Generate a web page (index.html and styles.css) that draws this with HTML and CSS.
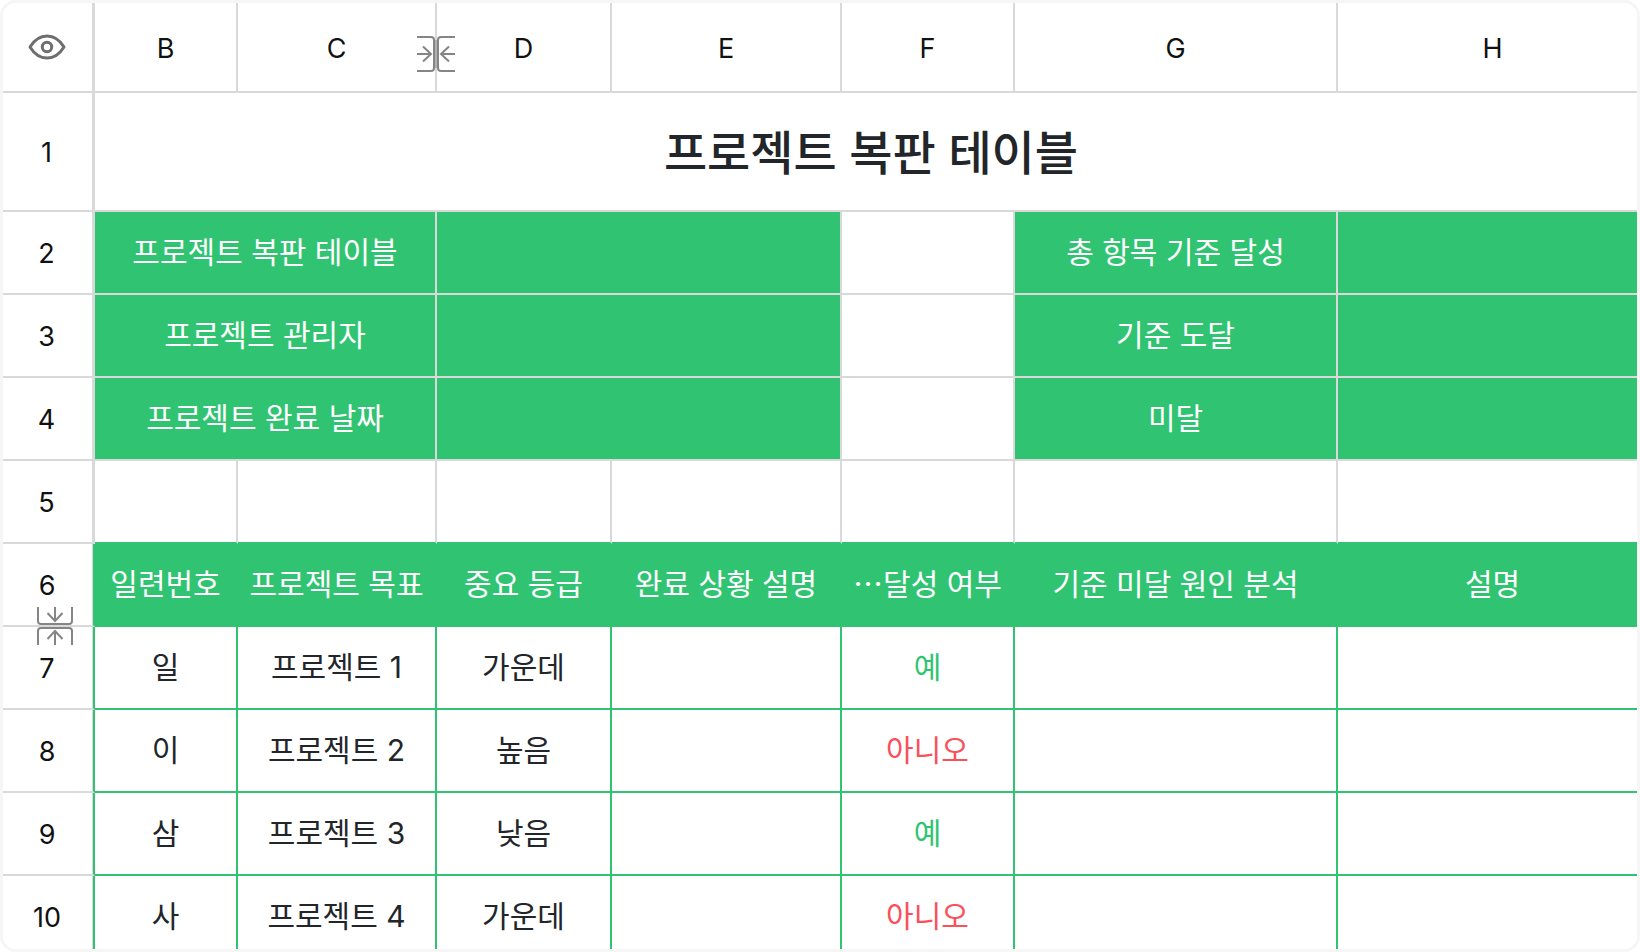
FILE: index.html
```html
<!DOCTYPE html>
<html lang="ko">
<head>
<meta charset="utf-8">
<title>프로젝트 복판 테이블</title>
<link rel="stylesheet" href="styles.css">
</head>
<body>
<main class="frame">
<table class="sheet">
<colgroup>
<col class="col-index"><col class="col-b"><col class="col-c"><col class="col-d"><col class="col-e"><col class="col-f"><col class="col-g"><col class="col-h">
</colgroup>
<thead>
<tr class="letters">
<th class="index corner">
<button class="eye" type="button" aria-label="보기">
<svg width="38" height="28" viewBox="0 0 38 28" fill="none" stroke="#6e6e6e" stroke-width="3" stroke-linejoin="round"><path d="M2 14C6 7.500 11.500 3 19 3s13 4.500 17 11c-4 6.500-9.500 11-17 11S6 20.500 2 14Z"/><circle cx="19" cy="14" r="4.700"/></svg>
</button>
</th>
<th scope="col">B</th>
<th scope="col" class="anchor">C
<button class="fold fold-col" type="button" aria-label="열 펼치기">
<svg width="40" height="38" viewBox="0 0 40 38" fill="none" stroke="#858585" stroke-width="2"><path d="M1 2h14q3 0 3 3v28q0 3-3 3H1M39 2H25q-3 0-3 3v28q0 3 3 3h14M1 19h14M7 11.500l8 7.500-8 7.500M39 19H25M33 11.500L25 19l8 7.500"/><path d="M18.500 5v28M21.500 5v28"/></svg>
</button>
</th>
<th scope="col">D</th>
<th scope="col">E</th>
<th scope="col">F</th>
<th scope="col">G</th>
<th scope="col">H</th>
</tr>
</thead>
<tbody>
<tr class="title-row"><th class="index" scope="row">1</th><td class="title" colspan="7">프로젝트 복판 테이블</td></tr>
<tr><th class="index" scope="row">2</th><td class="fill" colspan="2">프로젝트 복판 테이블</td><td class="fill" colspan="2"></td><td></td><td class="fill">총 항목 기준 달성</td><td class="fill"></td></tr>
<tr><th class="index" scope="row">3</th><td class="fill" colspan="2">프로젝트 관리자</td><td class="fill" colspan="2"></td><td></td><td class="fill">기준 도달</td><td class="fill"></td></tr>
<tr><th class="index" scope="row">4</th><td class="fill" colspan="2">프로젝트 완료 날짜</td><td class="fill" colspan="2"></td><td></td><td class="fill">미달</td><td class="fill"></td></tr>
<tr class="spacer"><th class="index" scope="row">5</th><td></td><td></td><td></td><td></td><td></td><td></td><td></td></tr>
</tbody>
<tbody class="goals">
<tr class="heads"><th class="index anchor" scope="row">6
<button class="fold fold-row" type="button" aria-label="행 펼치기">
<svg width="38" height="40" viewBox="0 0 38 40" fill="none" stroke="#858585" stroke-width="2"><path d="M2 1v14q0 3 3 3h28q3 0 3-3V1M2 39V25q0-3 3-3h28q3 0 3 3v14M19 1v14M11.500 7l7.500 8 7.500-8M19 39V25M11.500 33l7.500-8 7.500 8"/></svg>
</button>
</th><td>일련번호</td><td>프로젝트 목표</td><td>중요 등급</td><td>완료 상황 설명</td><td>⋯달성 여부</td><td>기준 미달 원인 분석</td><td>설명</td></tr>
<tr><th class="index" scope="row">7</th><td>일</td><td>프로젝트 1</td><td>가운데</td><td></td><td class="yes">예</td><td></td><td></td></tr>
<tr><th class="index" scope="row">8</th><td>이</td><td>프로젝트 2</td><td>높음</td><td></td><td class="no">아니오</td><td></td><td></td></tr>
<tr><th class="index" scope="row">9</th><td>삼</td><td>프로젝트 3</td><td>낮음</td><td></td><td class="yes">예</td><td></td><td></td></tr>
<tr><th class="index" scope="row">10</th><td>사</td><td>프로젝트 4</td><td>가운데</td><td></td><td class="no">아니오</td><td></td><td></td></tr>
</tbody>
</table>
</main>
</body>
</html>
```

FILE: styles.css
```css
:root {
  --line: #d9d9d9;
  --green: #30c472;
  --red: #f9515c;
  --ink: #22262a;
}

* {
  box-sizing: border-box;
}

body {
  margin: 0;
  background: #ffffff;
  color: var(--ink);
  font-family: Inter, "Noto Sans CJK KR", sans-serif;
}

.frame {
  height: 100vh;
  border: 3px solid #f6f6f6;
  border-radius: 16px;
  overflow: hidden;
}

/* The last column runs on past the right edge of the frame. */
.sheet {
  width: calc(100% + 12px);
  table-layout: fixed;
  border-collapse: separate;
  border-spacing: 0;
  font-size: 30px;
  line-height: 40px;
  text-align: center;
}

.col-index { width: 92px; }
.col-b { width: 143px; }
.col-c { width: 199px; }
.col-d { width: 175px; }
.col-e { width: 230px; }
.col-f { width: 173px; }
.col-g { width: 323px; }
.col-h { width: 311px; }

.sheet th,
.sheet td {
  height: 83px;
  padding: 0 0 2px;
  border: 0 solid var(--line);
  border-width: 0 2px 2px 0;
  white-space: nowrap;
}

.sheet th {
  padding: 3px 0 0;
  color: #111111;
  font-size: 27px;
  font-weight: 400;
}

.sheet .index {
  padding-right: 2px;
  border-right-width: 3px;
}

.sheet .letters th {
  height: 90px;
}

.sheet .letters .corner {
  padding-top: 0;
}

.sheet .title-row td {
  height: 119px;
}

.sheet .title {
  padding: 2px 0 0;
  font-size: 47px;
  font-weight: 500;
  line-height: 60px;
}

.sheet .fill {
  background: var(--green);
  background-clip: padding-box;
  color: #ffffff;
}

.sheet .spacer td {
  border-bottom-color: var(--green);
}

.goals td {
  border-color: var(--green);
}

.sheet .goals td {
  border-color: var(--green);
}

.sheet .goals .index {
  border-right: 2px solid var(--green);
  box-shadow: inset -1px 0 var(--line);
}

.goals .heads td {
  background: var(--green);
  color: #ffffff;
}

.sheet .goals .yes {
  color: var(--green);
}

.sheet .goals .no {
  color: var(--red);
}

.eye,
.fold {
  padding: 0;
  border: 0;
  background: none;
}

.eye svg,
.fold svg {
  display: block;
}

.eye {
  display: block;
  margin: 0 auto;
}

.anchor {
  position: relative;
}

/* Fold handles straddle the grid line between two headers. */
.fold {
  position: absolute;
}

.fold-col {
  top: 32px;
  right: -21px;
}

.fold-row {
  bottom: -21px;
  left: 33px;
}
```
